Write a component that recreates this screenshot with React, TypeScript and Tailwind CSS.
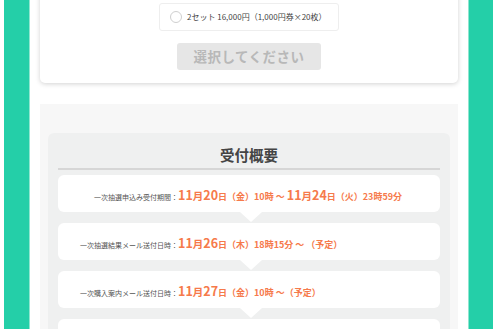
const orange = "text-[#f67a4b]";

type Part = { t: string; k: "big" | "mid" | "sm" };

const rows: { label: string; parts: Part[] }[] = [
  {
    label: "一次抽選申込み受付期間：",
    parts: [
      { t: "11", k: "big" },
      { t: "月", k: "mid" },
      { t: "20", k: "big" },
      { t: "日（金）10時 ～ ", k: "sm" },
      { t: "11", k: "big" },
      { t: "月", k: "mid" },
      { t: "24", k: "big" },
      { t: "日（火）23時59分", k: "sm" },
    ],
  },
  {
    label: "一次抽選結果メール送付日時：",
    parts: [
      { t: "11", k: "big" },
      { t: "月", k: "mid" },
      { t: "26", k: "big" },
      { t: "日（木）18時15分 ～ （予定）", k: "sm" },
    ],
  },
  {
    label: "一次購入案内メール送付日時：",
    parts: [
      { t: "11", k: "big" },
      { t: "月", k: "mid" },
      { t: "27", k: "big" },
      { t: "日（金）10時 ～（予定）", k: "sm" },
    ],
  },
  { label: "", parts: [] },
];

const sizes: Record<Part["k"], string> = {
  big: "text-[12.5px]",
  mid: "text-[10.5px]",
  sm: "text-[9px]",
};

function ScheduleRow({ label, parts }: { label: string; parts: Part[] }) {
  return (
    <div className="relative h-[37px] shrink-0 rounded-[6px] bg-white flex items-center">
      <div className="flex items-baseline w-full -mt-[1px]">
        <span className="w-[120px] shrink-0 text-right text-[7px] text-[#555]">{label}</span>
        <span className={`font-bold ${orange} whitespace-nowrap`}>
          {parts.map((p, i) => (
            <span key={i} className={sizes[p.k]}>
              {p.t}
            </span>
          ))}
        </span>
      </div>
      <div className="absolute top-full left-[182px] w-0 h-0 border-l-[11px] border-r-[11px] border-t-[10px] border-l-transparent border-r-transparent border-t-white" />
    </div>
  );
}

export default function App() {
  return (
    <div
      className="w-[500px] h-[329px] overflow-hidden bg-white flex"
      style={{ fontFamily: '"Noto Sans CJK JP", "Noto Sans", sans-serif' }}
    >
      <div className="w-[4px] shrink-0" />
      <div className="w-[26px] shrink-0 bg-[#24cfa8] border-r border-[#8fe6d0]" />

      <main className="w-[438px] shrink-0 px-[10px]">
        {/* ticket selection card */}
        <div className="-mt-[10px] pt-[13px] pb-[13px] bg-white rounded-[5px] shadow-[0_1px_5px_rgba(0,0,0,0.18)] flex flex-col items-center">
          <label className="w-[180px] h-[28px] border border-[#eeeeee] rounded-[3px] flex items-center pl-[10px] gap-[5px]">
            <span className="w-[12px] h-[12px] rounded-full border border-[#cfcfcf] bg-white" />
            <span className="text-[8px] text-[#444] whitespace-nowrap">2セット 16,000円（1,000円券×20枚）</span>
          </label>
          <button className="mt-[12px] w-[144px] h-[27px] rounded-[3px] bg-[#e6e6e6] text-[13.5px] font-bold text-[#b8b8b8] tracking-[0.5px]">
            選択してください
          </button>
        </div>

        {/* reception summary */}
        <section className="mt-[21px] bg-[#f7f7f7] px-[8px] pt-[29px] pb-[20px]">
          <div className="rounded-[6px] bg-[#eff0f0] px-[10px] pb-[12px]">
            <h2 className="pt-[11px] pb-[2px] text-center text-[14.5px] leading-[22px] font-bold text-[#444] border-b-2 border-[#d6d6d6]">
              受付概要
            </h2>
            <div className="mt-[5px] flex flex-col gap-[11px]">
              {rows.map((r, i) => (
                <ScheduleRow key={i} label={r.label} parts={r.parts} />
              ))}
            </div>
          </div>
        </section>
      </main>

      <div className="w-[25px] shrink-0 bg-[#24cfa8] border-l border-[#8fe6d0]" />
    </div>
  );
}
